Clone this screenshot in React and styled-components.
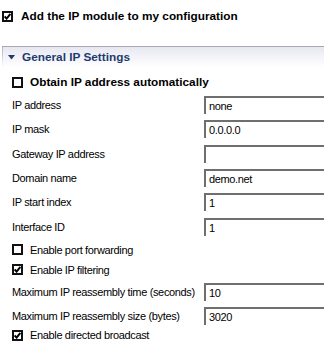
import React from 'react';
import styled, { createGlobalStyle } from 'styled-components';

const GlobalStyle = createGlobalStyle`
  html, body {
    margin: 0;
    padding: 0;
    background: #fff;
    overflow: hidden;
  }
  body {
    font-family: "Liberation Sans", Arial, sans-serif;
    font-size: 11px;
    color: #000;
  }
`;

const Page = styled.div`
  width: 324px;
  height: 360px;
  overflow: hidden;
  display: flex;
  flex-direction: column;
`;

const TopRow = styled.label`
  display: flex;
  align-items: center;
  gap: 8px;
  height: 14px;
  margin: 9px 0 0 2px;
  font-weight: bold;
  font-size: 11.8px;
`;

const Box = styled.span`
  box-sizing: border-box;
  width: 11px;
  height: 11px;
  border: 2px solid #111;
  background: #fff;
  display: flex;
  align-items: center;
  justify-content: center;
  flex: none;
`;

const SectionHeader = styled.div`
  margin: 23px 0 0 2px;
  height: 20px;
  border-top: 1px solid #a8a8bc;
  display: flex;
  align-items: center;
  gap: 7px;
  padding-left: 6px;
  color: #1e3a6f;
  font-weight: bold;
  font-size: 11.8px;
  background:
    linear-gradient(to bottom, #b4b4c8, rgba(255, 255, 255, 0)) left top / 1px 100% no-repeat,
    linear-gradient(to bottom, #e7e7f1, #fff);
`;

const Body = styled.div`
  display: flex;
  flex-direction: column;
  padding-left: 12px;
  margin-top: 4px;
`;

const CheckRow = styled.label`
  display: flex;
  align-items: center;
  gap: 7px;
  height: ${(p) => p.$h || 20}px;
  margin-top: ${(p) => p.$shift || 0}px;
  font-weight: ${(p) => (p.$bold ? 'bold' : 'normal')};
  font-size: ${(p) => (p.$bold ? 11.8 : 11)}px;
  letter-spacing: ${(p) => (p.$bold ? 0 : -0.35)}px;
`;

const FieldRow = styled.div`
  display: grid;
  grid-template-columns: 192px 130px;
  align-items: center;
  height: 24.3px;
  letter-spacing: -0.35px;
`;

const Label = styled.span`
  white-space: nowrap;
`;

const Input = styled.div`
  box-sizing: border-box;
  height: 18px;
  padding: 1px 0 0 3px;
  border-top: 2px solid #6f6f6f;
  border-left: 2px solid #6f6f6f;
  background: #fff;
  line-height: 14px;
  font-size: 11px;
`;

const Triangle = () => (
  <svg width="7" height="5" viewBox="0 0 7 5">
    <path d="M0 0 H7 L3.5 4.5 Z" fill="#1e3a6f" />
  </svg>
);

const Check = () => (
  <svg width="7" height="7" viewBox="0 0 7 7">
    <path d="M0.6 3.4 L2.6 5.6 L6.4 1" stroke="#000" strokeWidth="2" fill="none" />
  </svg>
);

const CheckBox = ({ checked }) => <Box>{checked && <Check />}</Box>;

const Field = ({ label, value }) => (
  <FieldRow>
    <Label>{label}</Label>
    <Input>{value}</Input>
  </FieldRow>
);

const App = () => (
  <Page>
    <GlobalStyle />
    <TopRow>
      <CheckBox checked />
      Add the IP module to my configuration
    </TopRow>
    <SectionHeader>
      <Triangle />
      General IP Settings
    </SectionHeader>
    <Body>
      <CheckRow $bold $h={22}>
        <CheckBox />
        Obtain IP address automatically
      </CheckRow>
      <Field label="IP address" value="none" />
      <Field label="IP mask" value="0.0.0.0" />
      <Field label="Gateway IP address" value="" />
      <Field label="Domain name" value="demo.net" />
      <Field label="IP start index" value="1" />
      <Field label="Interface ID" value="1" />
      <CheckRow $shift={1}>
        <CheckBox />
        Enable port forwarding
      </CheckRow>
      <CheckRow>
        <CheckBox checked />
        Enable IP filtering
      </CheckRow>
      <Field label="Maximum IP reassembly time (seconds)" value="10" />
      <Field label="Maximum IP reassembly size (bytes)" value="3020" />
      <CheckRow $shift={-3}>
        <CheckBox checked />
        Enable directed broadcast
      </CheckRow>
    </Body>
  </Page>
);

export default App;
